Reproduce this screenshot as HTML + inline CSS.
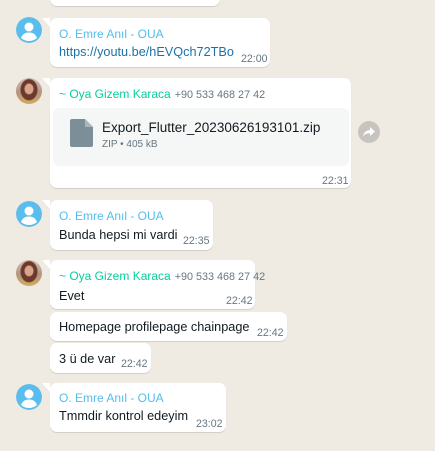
<!DOCTYPE html>
<html><head><meta charset="utf-8"><style>
*{margin:0;padding:0;box-sizing:border-box}
body{width:435px;height:451px;background:#efeae2;font-family:"Liberation Sans",sans-serif;position:relative;overflow:hidden;color:#111b21}
.b{position:absolute;left:50px;background:#fff;border-radius:7px;box-shadow:0 1px 0.5px rgba(11,20,26,.13)}
.tail{position:absolute;left:-8px;top:0;width:0;height:0;border-top:9px solid #fff;border-left:8px solid transparent}
.t{position:absolute;font-size:12.7px;white-space:nowrap}
.n{position:absolute;left:9px;font-size:12px;white-space:nowrap}
.blue{color:#53bdeb}.green{color:#06cf9c}
.ph{color:#667781;font-size:10.8px;margin-left:4px}
.tm{position:absolute;font-size:10.6px;color:#667781;white-space:nowrap}
.av{position:absolute;left:16px;width:26px;height:26px;border-radius:50%;overflow:hidden}
.pic{background:radial-gradient(ellipse 5px 6px at 50% 42%,#d8a58a 0 4px,transparent 5px),radial-gradient(ellipse 8px 10px at 50% 45%,#6b3a2c 0 8px,transparent 9px),linear-gradient(180deg,#d3c2b4 0,#b59382 55%,#d1ad5a 100%)}
</style></head><body>
<div class="b" style="top:-10px;width:170px;height:16px"></div>

<svg class="av" style="top:17px" viewBox="0 0 26 26"><circle cx="13" cy="13" r="13" fill="#59bdee"/><circle cx="13" cy="10" r="4.5" fill="#fff"/><path d="M5 21c1.5-4 4.5-5.5 8-5.5s6.5 1.5 8 5.5a12 12 0 0 1-16 0z" fill="#fff"/></svg>
<div class="b" style="top:18px;width:220px;height:49px"><div class="tail"></div>
<div class="n blue" style="top:9px">O. Emre Anıl - OUA</div>
<div class="t" style="left:9px;top:27px;color:#1b72a8">https://youtu.be/hEVQch72TBo</div>
<div class="tm" style="left:191px;top:35px">22:00</div></div>

<div class="av pic" style="top:78px"></div>
<div class="b" style="top:78px;width:301px;height:110px"><div class="tail"></div>
<div class="n green" style="top:9px">~ Oya Gizem Karaca<span class="ph">+90 533 468 27 42</span></div>
<div style="position:absolute;left:3px;top:30px;width:296px;height:58px;background:#f5f6f6;border-radius:6px">
<svg style="position:absolute;left:17px;top:11px" width="23" height="28" viewBox="0 0 23 28"><path d="M2 0h13l8 8v18a2 2 0 0 1-2 2H2a2 2 0 0 1-2-2V2a2 2 0 0 1 2-2z" fill="#7c8f99"/><path d="M15 0v8h8z" fill="#a9b6bd"/></svg>
<div class="t" style="left:49px;top:12px;font-size:13.5px">Export_Flutter_20230626193101.zip</div>
<div class="tm" style="left:49px;top:31px;font-size:10px">ZIP • 405 kB</div></div>
<div class="tm" style="left:272px;top:97px">22:31</div></div>
<svg style="position:absolute;left:358px;top:121px" width="22" height="22" viewBox="0 0 22 22"><circle cx="11" cy="11" r="11" fill="#c7c3be"/><path d="M12 6l5 4.5-5 4.5v-2.7c-3.5 0-5.5 1-7 3.5.5-3.8 2.5-6.3 7-6.8z" fill="#fff"/></svg>

<svg class="av" style="top:201px" viewBox="0 0 26 26"><circle cx="13" cy="13" r="13" fill="#59bdee"/><circle cx="13" cy="10" r="4.5" fill="#fff"/><path d="M5 21c1.5-4 4.5-5.5 8-5.5s6.5 1.5 8 5.5a12 12 0 0 1-16 0z" fill="#fff"/></svg>
<div class="b" style="top:200px;width:163px;height:50px"><div class="tail"></div>
<div class="n blue" style="top:9px">O. Emre Anıl - OUA</div>
<div class="t" style="left:9px;top:28px">Bunda hepsi mi vardi</div>
<div class="tm" style="left:133px;top:35px">22:35</div></div>

<div class="av pic" style="top:260px"></div>
<div class="b" style="top:260px;width:205px;height:49px"><div class="tail"></div>
<div class="n green" style="top:9px">~ Oya Gizem Karaca<span class="ph">+90 533 468 27 42</span></div>
<div class="t" style="left:9px;top:29px">Evet</div>
<div class="tm" style="left:176px;top:35px">22:42</div></div>

<div class="b" style="top:312px;width:237px;height:29px">
<div class="t" style="left:9px;top:8px">Homepage profilepage chainpage</div>
<div class="tm" style="left:207px;top:15px">22:42</div></div>

<div class="b" style="top:343px;width:101px;height:30px">
<div class="t" style="left:9px;top:9px">3 ü de var</div>
<div class="tm" style="left:71px;top:15px">22:42</div></div>

<svg class="av" style="top:384px" viewBox="0 0 26 26"><circle cx="13" cy="13" r="13" fill="#59bdee"/><circle cx="13" cy="10" r="4.5" fill="#fff"/><path d="M5 21c1.5-4 4.5-5.5 8-5.5s6.5 1.5 8 5.5a12 12 0 0 1-16 0z" fill="#fff"/></svg>
<div class="b" style="top:383px;width:176px;height:49px"><div class="tail"></div>
<div class="n blue" style="top:8px">O. Emre Anıl - OUA</div>
<div class="t" style="left:9px;top:26px">Tmmdir kontrol edeyim</div>
<div class="tm" style="left:146px;top:35px">23:02</div></div>
</body></html>
